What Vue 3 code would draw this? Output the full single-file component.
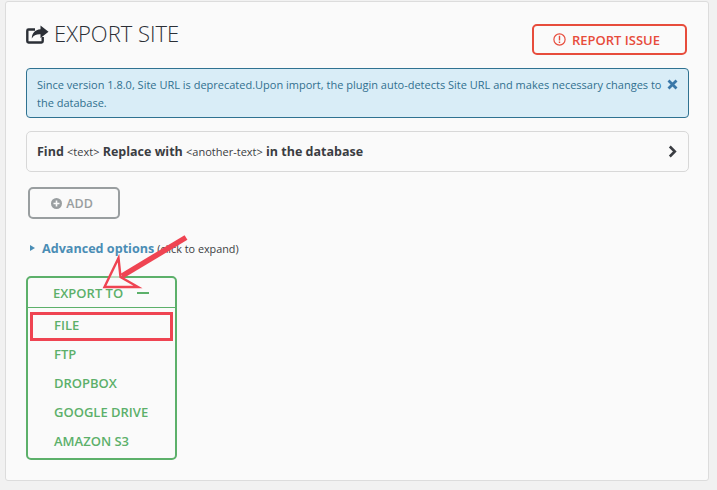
<script setup>
const items = ['FILE', 'FTP', 'DROPBOX', 'GOOGLE DRIVE', 'AMAZON S3']
</script>

<template>
  <div class="page">
    <section class="panel">
      <header class="head">
        <h1 class="title">
          <svg class="share" width="23" height="19" viewBox="0 0 23 19">
            <path d="M9 4.5H2.5a1.2 1.2 0 0 0-1.2 1.2v10.6a1.2 1.2 0 0 0 1.2 1.2h13a1.2 1.2 0 0 0 1.2-1.2V12" fill="none" stroke="#2b2f36" stroke-width="2.4" />
            <path d="M14.5 0.5 22.5 6.8 14.5 13V9.2C10.5 9 7.6 10 5.8 13.6 5.8 8.6 8.8 4.8 14.5 4.3Z" fill="#2b2f36" />
          </svg>
          <span>EXPORT SITE</span>
        </h1>
        <button class="report">
          <svg width="13" height="13" viewBox="0 0 13 13">
            <circle cx="6.5" cy="6.5" r="5.6" fill="none" stroke="#e74c3c" stroke-width="1.2" />
            <path d="M6.5 2.8v4.6M6.5 8.6v1.5" stroke="#e74c3c" stroke-width="1.4" />
          </svg>
          REPORT ISSUE
        </button>
      </header>

      <div class="notice">
        <p>Since version 1.8.0, Site URL is deprecated.Upon import, the plugin auto-detects Site URL and makes necessary changes to the database.</p>
        <svg class="close" width="11" height="11" viewBox="0 0 11 11">
          <path d="M1.5 1.5l8 8M9.5 1.5l-8 8" stroke="#3a78a8" stroke-width="2.8" />
        </svg>
      </div>

      <div class="find">
        <span><b>Find</b> <small>&lt;text&gt;</small> <b>Replace with</b> <small>&lt;another-text&gt;</small> <b>in the database</b></span>
        <svg width="9" height="13" viewBox="0 0 9 13">
          <path d="M1.8 1.5 6.8 6.5 1.8 11.5" fill="none" stroke="#3a3d42" stroke-width="2.6" />
        </svg>
      </div>

      <button class="add">
        <svg width="11" height="11" viewBox="0 0 11 11">
          <circle cx="5.5" cy="5.5" r="5.5" fill="#999ea0" />
          <path d="M5.5 2.5v6M2.5 5.5h6" stroke="#fafafa" stroke-width="1.6" />
        </svg>
        ADD
      </button>

      <div class="advanced">
        <i class="tri"></i>
        <b>Advanced options</b>
        <span>(click to expand)</span>
      </div>

      <div class="export">
        <div class="export-head">
          <span>EXPORT TO</span>
          <i class="dash"></i>
        </div>
        <ul>
          <li v-for="item in items" :key="item" :class="{ marked: item === 'FILE' }">{{ item }}</li>
        </ul>
        <svg class="arrow" width="100" height="64" viewBox="0 0 100 64">
          <path d="M97 1.5 33 40" stroke="#ef4452" stroke-width="5.5" />
          <path d="M29.5 22 15.5 51 49 51 31.5 41 Z" fill="#fafafa" fill-opacity="0.6" stroke="#ef4452" stroke-width="2.4" />
        </svg>
      </div>
    </section>
  </div>
</template>

<style>
body { margin: 0; }
</style>

<style scoped>
.page {
  box-sizing: border-box;
  width: 717px;
  height: 490px;
  padding: 1px 8px 9px 5px;
  background: #f1f1f1;
  font-family: "Open Sans", sans-serif;
  overflow: hidden;
}
.panel {
  box-sizing: border-box;
  height: 480px;
  padding: 22px 19px 0 20px;
  background: #fafafa;
  border: 1px solid #dcdcdc;
  border-radius: 3px;
}
.head {
  display: flex;
  justify-content: space-between;
  align-items: flex-start;
  height: 44px;
}
.title {
  display: flex;
  align-items: center;
  gap: 5px;
  margin: 0;
  height: 18px;
  font-size: 22px;
  font-weight: 300;
  color: #2b2f36;
  white-space: nowrap;
}
.share { flex: none; margin-top: 3px; }
.report {
  display: flex;
  align-items: center;
  justify-content: center;
  gap: 6px;
  box-sizing: border-box;
  width: 155px;
  height: 31px;
  margin-right: 2px;
  padding-right: 12px;
  background: transparent;
  border: 2px solid #e74c3c;
  border-radius: 5px;
  color: #e74c3c;
  font: 600 13px "Open Sans", sans-serif;
}
.notice {
  position: relative;
  box-sizing: border-box;
  height: 50px;
  padding: 7px 10px 0;
  background: #d9edf7;
  border: 1px solid #2f7291;
  border-radius: 4px;
  color: #31708f;
  font-size: 11px;
  line-height: 18px;
}
.notice p { margin: 0; padding-right: 16px; }
.close { position: absolute; top: 10px; right: 10px; }
.find {
  display: flex;
  justify-content: space-between;
  align-items: center;
  box-sizing: border-box;
  height: 41px;
  margin-top: 13px;
  padding: 0 11px 0 10px;
  border: 1px solid #d8d8d8;
  border-radius: 5px;
  color: #3a3d42;
  font-size: 12.5px;
}
.find b { font-weight: 700; }
.find small { font-size: 11px; }
.add {
  display: flex;
  align-items: center;
  justify-content: center;
  gap: 4px;
  box-sizing: border-box;
  width: 92px;
  height: 32px;
  margin: 15px 0 0 2px;
  padding-right: 10px;
  background: transparent;
  border: 2px solid #999ea0;
  border-radius: 5px;
  color: #999ea0;
  font: 600 12.5px "Open Sans", sans-serif;
}
.advanced {
  display: flex;
  align-items: center;
  height: 20px;
  margin: 19px 0 0 4px;
  color: #3a3d42;
  font-size: 10.8px;
  white-space: nowrap;
}
.advanced b {
  margin-right: 3px;
  color: #4a8db5;
  font-size: 12.6px;
  font-weight: 700;
}
.tri {
  width: 0;
  height: 0;
  margin-right: 7px;
  border-left: 5px solid #4a8db5;
  border-top: 3px solid transparent;
  border-bottom: 3px solid transparent;
}
.export {
  position: relative;
  box-sizing: border-box;
  width: 151px;
  height: 184px;
  margin-top: 18px;
  border: 2px solid #5cb06a;
  border-radius: 5px;
  color: #5cb06a;
  font-size: 13px;
  font-weight: 600;
}
.export-head {
  display: flex;
  align-items: center;
  box-sizing: border-box;
  height: 30px;
  padding: 0 0 0 25px;
  border-bottom: 1px solid #5cb06a;
}
.dash {
  width: 12px;
  height: 2px;
  margin-left: 14px;
  background: #5cb06a;
}
ul { margin: 0; padding: 4px 0 0 2px; list-style: none; }
li {
  box-sizing: border-box;
  width: 143px;
  height: 29px;
  padding-left: 21px;
  line-height: 21px;
  border: 3px solid transparent;
}
li.marked { border-color: #ef4452; }
.arrow { position: absolute; left: 61px; top: -42px; overflow: visible; }
</style>
